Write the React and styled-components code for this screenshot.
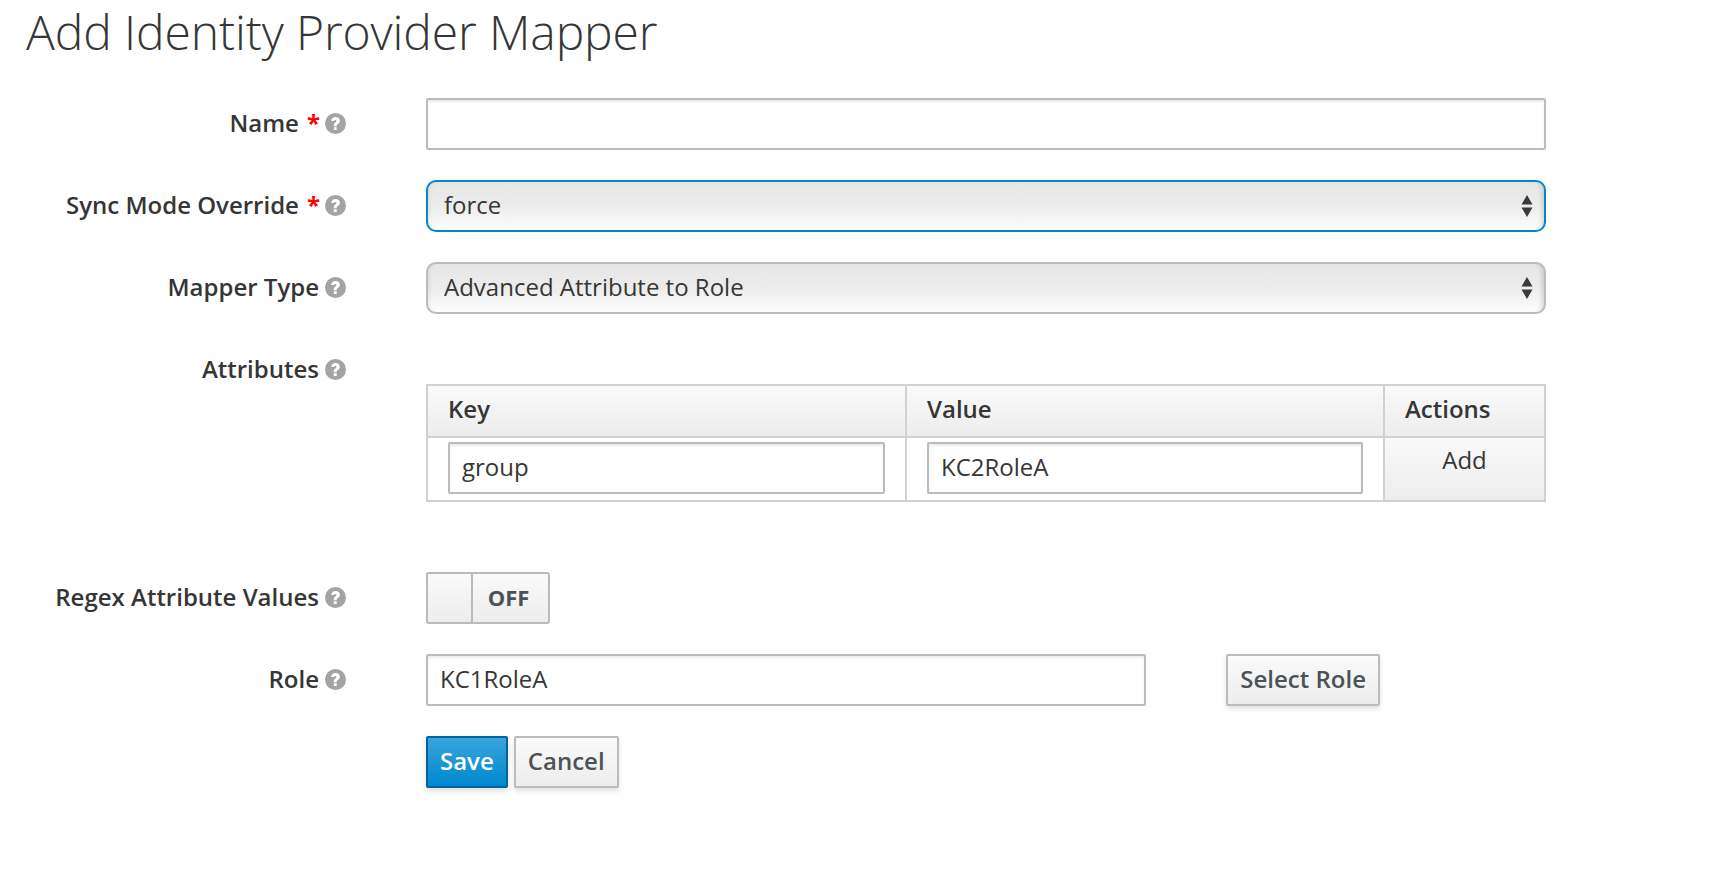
import React from 'react';
import styled, { createGlobalStyle } from 'styled-components';

const GlobalStyle = createGlobalStyle`
  html, body {
    margin: 0;
    padding: 0;
    background: #fff;
    font-family: "Open Sans", "Liberation Sans", sans-serif;
    color: #363636;
  }
  * { box-sizing: border-box; }
`;

const Page = styled.div`
  width: 1726px;
  height: 870px;
  overflow: hidden;
  padding-left: 26px;
`;

const Title = styled.h1`
  margin: 0;
  height: 98px;
  padding-top: 3px;
  font-size: 48px;
  line-height: 58px;
  font-weight: 300;
  letter-spacing: -0.1px;
  color: #363636;
`;

const Form = styled.form`
  display: flex;
  flex-direction: column;
  width: 1520px;
`;

const Row = styled.div`
  display: grid;
  grid-template-columns: 320px 1120px;
  column-gap: 80px;
  margin-bottom: ${props => props.$gap || 30}px;
`;

const Label = styled.label`
  height: 52px;
  padding-bottom: 3px;
  display: flex;
  align-items: center;
  justify-content: flex-end;
  font-size: 24px;
  font-weight: 600;
  white-space: nowrap;
  color: #363636;
`;

const Required = styled.span`
  color: #f00;
  margin-left: 8px;
  margin-right: -1px;
  font-weight: 700;
`;

const HelpBadge = styled.svg`
  width: 21px;
  height: 21px;
  margin-left: 6px;
  margin-top: 1px;
  flex: none;
`;

const TextInput = styled.input`
  display: block;
  width: ${props => props.$width || '100%'};
  height: 52px;
  border: 2px solid #bbb;
  border-radius: 2px;
  padding: 0 12px 4px;
  font: inherit;
  font-size: 24px;
  color: #363636;
  background: #fff;
  box-shadow: inset 0 2px 2px rgba(3, 3, 3, 0.08);
  outline: none;
`;

const SelectBox = styled.div`
  height: 52px;
  display: flex;
  align-items: center;
  justify-content: space-between;
  padding: 0 11px 3px 16px;
  font-size: 24px;
  color: #363636;
  border: 2px solid ${props => (props.$focused ? '#0088ce' : '#bbb')};
  border-radius: 10px;
  background: linear-gradient(to bottom, #e6e6e6 0%, #ececec 50%, #fdfdfd 100%);
  box-shadow: inset 4px 0 4px -3px rgba(0, 0, 0, 0.08), inset -5px 0 4px -3px rgba(0, 0, 0, 0.14);
`;

const SelectArrows = styled.svg`
  width: 12px;
  height: 24px;
  margin-top: 3px;
  flex: none;
`;

const Table = styled.div`
  margin-top: 40px;
  display: grid;
  grid-template-columns: 479px 478px 159px;
  border: 2px solid #d1d1d1;
`;

const HeadCell = styled.div`
  height: 52px;
  display: flex;
  align-items: center;
  padding: 0 0 6px 20px;
  font-size: 24px;
  font-weight: 600;
  color: #363636;
  background: linear-gradient(to bottom, #fafafa 0%, #ededed 100%);
  border-bottom: 2px solid #d1d1d1;
  border-right: ${props => (props.$last ? 'none' : '2px solid #d1d1d1')};
`;

const BodyCell = styled.div`
  height: 62px;
  padding: 4px 20px 0;
  border-right: 2px solid #d1d1d1;
`;

const ActionCell = styled.div`
  height: 62px;
  padding-top: 5px;
  text-align: center;
  font-size: 24px;
  color: #363636;
  background: linear-gradient(to bottom, #fafafa 0%, #ededed 100%);
`;

const Toggle = styled.div`
  width: 124px;
  height: 52px;
  display: flex;
  border: 2px solid #bbb;
  border-radius: 3px;
  background: linear-gradient(to bottom, #fafafa 0%, #ededed 100%);
`;

const ToggleKnob = styled.div`
  width: 47px;
  margin: -2px 0 -2px -2px;
  border: 2px solid #bbb;
  border-radius: 3px;
  background: linear-gradient(to bottom, #fafafa 0%, #ededed 100%);
`;

const ToggleText = styled.div`
  flex: 1;
  display: flex;
  align-items: center;
  justify-content: center;
  padding: 0 4px 2px 0;
  font-size: 22px;
  font-weight: 700;
  color: #4d5258;
`;

const RoleFields = styled.div`
  display: flex;
  justify-content: space-between;
  width: 954px;
  height: 52px;
`;

const Button = styled.button`
  height: 52px;
  padding: 0 12px 4px;
  font: inherit;
  font-size: 24px;
  font-weight: 600;
  color: #4d5258;
  border: 2px solid #bbb;
  border-radius: 2px;
  background: linear-gradient(to bottom, #fafafa 0%, #ededed 100%);
  box-shadow: 0 3px 5px rgba(3, 3, 3, 0.12);
`;

const PrimaryButton = styled(Button)`
  color: #fff;
  border-color: #00659c;
  background: linear-gradient(to bottom, #39a5dc 0%, #0088ce 100%);
`;

const Actions = styled.div`
  display: flex;
  gap: 6px;
`;

const HelpIcon = () => (
  <HelpBadge viewBox="0 0 21 21">
    <circle cx="10.500" cy="10.500" r="10.500" fill="#a4a4a4" />
    <path
      d="M6.200 8c.1-2.500 2-4 4.400-4 2.500 0 4.300 1.400 4.300 3.700 0 1.700-1 2.500-2.100 3.300-.8.600-1.100 1-1.100 1.800v.5H8.800v-.8c0-1.400.6-2.200 1.500-2.900.7-.6 1.100-1 1.100-1.600 0-.7-.4-1.100-1-1.100-.7 0-1.100.5-1.200 1.100H6.200zM8.800 14.200h2.900v2.900H8.800z"
      fill="#fff"
    />
  </HelpBadge>
);

const Arrows = () => (
  <SelectArrows viewBox="0 0 12 24">
    <path d="M6 1l5.500 9.500H.5zM6 23l-5.500-9.500h11z" fill="#3a3a3a" />
  </SelectArrows>
);

const FieldLabel = ({ text, required }) => (
  <Label>
    {text}
    {required && <Required>*</Required>}
    <HelpIcon />
  </Label>
);

const App = () => (
  <Page>
    <GlobalStyle />
    <Title>Add Identity Provider Mapper</Title>
    <Form>
      <Row>
        <FieldLabel text="Name" required />
        <TextInput readOnly value="" />
      </Row>
      <Row>
        <FieldLabel text="Sync Mode Override" required />
        <SelectBox $focused>
          force
          <Arrows />
        </SelectBox>
      </Row>
      <Row>
        <FieldLabel text="Mapper Type" />
        <SelectBox>
          Advanced Attribute to Role
          <Arrows />
        </SelectBox>
      </Row>
      <Row $gap={70}>
        <FieldLabel text="Attributes" />
        <Table>
          <HeadCell>Key</HeadCell>
          <HeadCell>Value</HeadCell>
          <HeadCell $last>Actions</HeadCell>
          <BodyCell>
            <TextInput readOnly value="group" />
          </BodyCell>
          <BodyCell>
            <TextInput readOnly value="KC2RoleA" />
          </BodyCell>
          <ActionCell>Add</ActionCell>
        </Table>
      </Row>
      <Row>
        <FieldLabel text="Regex Attribute Values" />
        <Toggle>
          <ToggleKnob />
          <ToggleText>OFF</ToggleText>
        </Toggle>
      </Row>
      <Row>
        <FieldLabel text="Role" />
        <RoleFields>
          <TextInput readOnly value="KC1RoleA" $width="720px" />
          <Button type="button">Select Role</Button>
        </RoleFields>
      </Row>
      <Row>
        <div />
        <Actions>
          <PrimaryButton type="button">Save</PrimaryButton>
          <Button type="button">Cancel</Button>
        </Actions>
      </Row>
    </Form>
  </Page>
);

export default App;
